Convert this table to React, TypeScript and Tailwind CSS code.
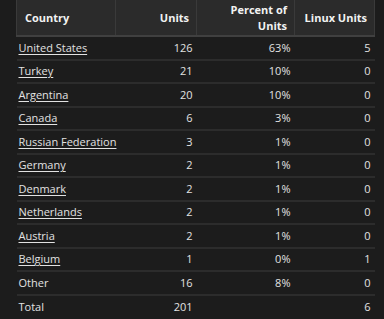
const rows: [string, string, string, string, boolean][] = [
  ['United States', '126', '63%', '5', true],
  ['Turkey', '21', '10%', '0', true],
  ['Argentina', '20', '10%', '0', true],
  ['Canada', '6', '3%', '0', true],
  ['Russian Federation', '3', '1%', '0', true],
  ['Germany', '2', '1%', '0', true],
  ['Denmark', '2', '1%', '0', true],
  ['Netherlands', '2', '1%', '0', true],
  ['Austria', '2', '1%', '0', true],
  ['Belgium', '1', '0%', '1', true],
  ['Other', '16', '8%', '0', false],
];

const App = () => {
  return (
    <div className="min-h-[319px] bg-[#1c1c1c] pl-4 pr-[10px] text-[11px] text-[#e2e2e2]" style={{ fontFamily: '"Open Sans", sans-serif' }}>
      <table className="w-[358px] border-collapse table-fixed whitespace-nowrap">
        <colgroup>
          <col className="w-[99px]" />
          <col className="w-[81px]" />
          <col className="w-[98px]" />
          <col className="w-[80px]" />
        </colgroup>
        <thead>
          <tr className="h-[36px] bg-[#2b2b2b] font-bold text-[#f2f2f2] leading-[16px]">
            <th className="border border-t-0 border-[#3a3a3a] border-b-2 border-b-[#404040] pl-2 text-left">Country</th>
            <th className="border border-t-0 border-[#3a3a3a] border-b-2 border-b-[#404040] pr-[7px] text-right">Units</th>
            <th className="border border-t-0 border-[#3a3a3a] border-b-2 border-b-[#404040] pr-[7px] text-right whitespace-normal">Percent of<br />Units</th>
            <th className="border border-t-0 border-[#3a3a3a] border-b-2 border-b-[#404040] pr-[7px] text-right">Linux Units</th>
          </tr>
        </thead>
        <tbody>
          {rows.map(([country, units, pct, linux, link]) => (
            <tr key={country} className="h-[23.5px] border-b-2 border-[#2c2c2c] last:border-b-[3px] last:border-b-[#e8e8e8]">
              <td className="pl-[2px]">
                {link ? <a href="#" className="underline underline-offset-2">{country}</a> : country}
              </td>
              <td className="pr-1 text-right">{units}</td>
              <td className="pr-1 text-right">{pct}</td>
              <td className="pr-1 text-right">{linux}</td>
            </tr>
          ))}
          <tr className="h-[24px]">
            <td className="pl-[2px]">Total</td>
            <td className="pr-1 text-right">201</td>
            <td></td>
            <td className="pr-1 text-right">6</td>
          </tr>
        </tbody>
      </table>
    </div>
  );
};

export default App;
